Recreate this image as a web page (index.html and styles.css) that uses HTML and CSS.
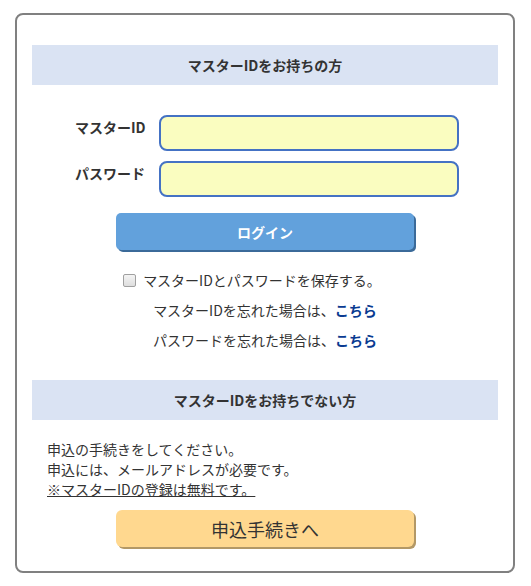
FILE: index.html
```html
<!DOCTYPE html>
<html lang="ja">

<head>
    <meta charset="UTF-8">
    <meta name="viewport" content="width=device-width, initial-scale=1.0">
    <title>ログイン</title>
    <link rel="stylesheet" href="styles.css">
</head>

<body>
    <div class="login-box">
        <h2 class="band">マスターIDをお持ちの方</h2>

        <form class="login-form">
            <div class="row">
                <label for="mid">マスターID</label>
                <input type="text" id="mid" name="mid">
            </div>
            <div class="row">
                <label for="pwd">パスワード</label>
                <input type="password" id="pwd" name="pwd">
            </div>
            <button class="btn-login" type="submit">ログイン</button>

            <div class="save">
                <input type="checkbox" id="save">
                <label for="save">マスターIDとパスワードを保存する。</label>
            </div>
            <p class="forgot">マスターIDを忘れた場合は、<a href="#">こちら</a></p>
            <p class="forgot">パスワードを忘れた場合は、<a href="#">こちら</a></p>
        </form>

        <h2 class="band">マスターIDをお持ちでない方</h2>

        <div class="info">
            <p>申込の手続きをしてください。</p>
            <p>申込には、メールアドレスが必要です。</p>
            <p class="note">※マスターIDの登録は無料です。</p>
        </div>

        <button class="btn-apply" type="button">申込手続きへ</button>
    </div>
</body>

</html>
```

FILE: styles.css
```css
* {
    margin: 0;
    padding: 0;
    box-sizing: border-box;
    font-family: "Noto Sans CJK JP", "Noto Sans", sans-serif;
}

body {
    background-color: #ffffff;
    color: #333333;
    font-size: 14px;
}

.login-box {
    width: 500px;
    margin: 13px 0 0 15px;
    padding: 30px 15px 24px;
    border: 2px solid #808080;
    border-radius: 8px;
}

.band {
    background-color: #dae3f3;
    height: 40px;
    line-height: 40px;
    text-align: center;
    font-size: 14px;
    font-weight: bold;
    color: #333333;
}

.login-form {
    padding-top: 30px;
    display: flex;
    flex-direction: column;
    align-items: center;
}

.row {
    display: flex;
    align-items: flex-start;
    margin-bottom: 10px;
    padding-left: 4px;
}

.row label {
    width: 84px;
    padding-top: 2px;
    line-height: 20px;
    font-weight: bold;
}

.row input {
    width: 300px;
    height: 36px;
    border: 2px solid #4472c4;
    border-radius: 8px;
    background-color: #fafdc0;
    padding: 0 8px;
    font-size: 14px;
    outline: none;
}

.btn-login {
    margin-top: 6px;
    width: 298px;
    height: 37px;
    border: none;
    border-radius: 5px;
    background-color: #62a1dc;
    box-shadow: 2px 2px 0 #3b6a99;
    color: #ffffff;
    font-size: 14px;
    font-weight: bold;
    cursor: pointer;
}

.save {
    margin-top: 15px;
    height: 30px;
    display: flex;
    align-items: center;
    padding-right: 26px;
}

.save input {
    appearance: none;
    width: 13px;
    height: 13px;
    margin-right: 7px;
    border: 1px solid #a0a0a0;
    border-radius: 2px;
    background: linear-gradient(#f4f4f4, #dedede);
}

.save label {
    line-height: 30px;
}

.forgot {
    line-height: 30px;
    text-align: center;
}

.forgot a {
    color: #0a3b91;
    font-weight: bold;
    text-decoration: none;
}

.login-form + .band {
    margin-top: 25px;
}

.info {
    padding: 19px 15px 0;
    line-height: 20px;
}

.note {
    text-decoration: underline;
}

.btn-apply {
    display: block;
    margin: 11px auto 0;
    width: 298px;
    height: 37px;
    border: none;
    border-radius: 6px;
    background-color: #ffd88f;
    box-shadow: 2px 2px 0 #b39866;
    color: #333333;
    font-size: 18px;
    cursor: pointer;
}
```
